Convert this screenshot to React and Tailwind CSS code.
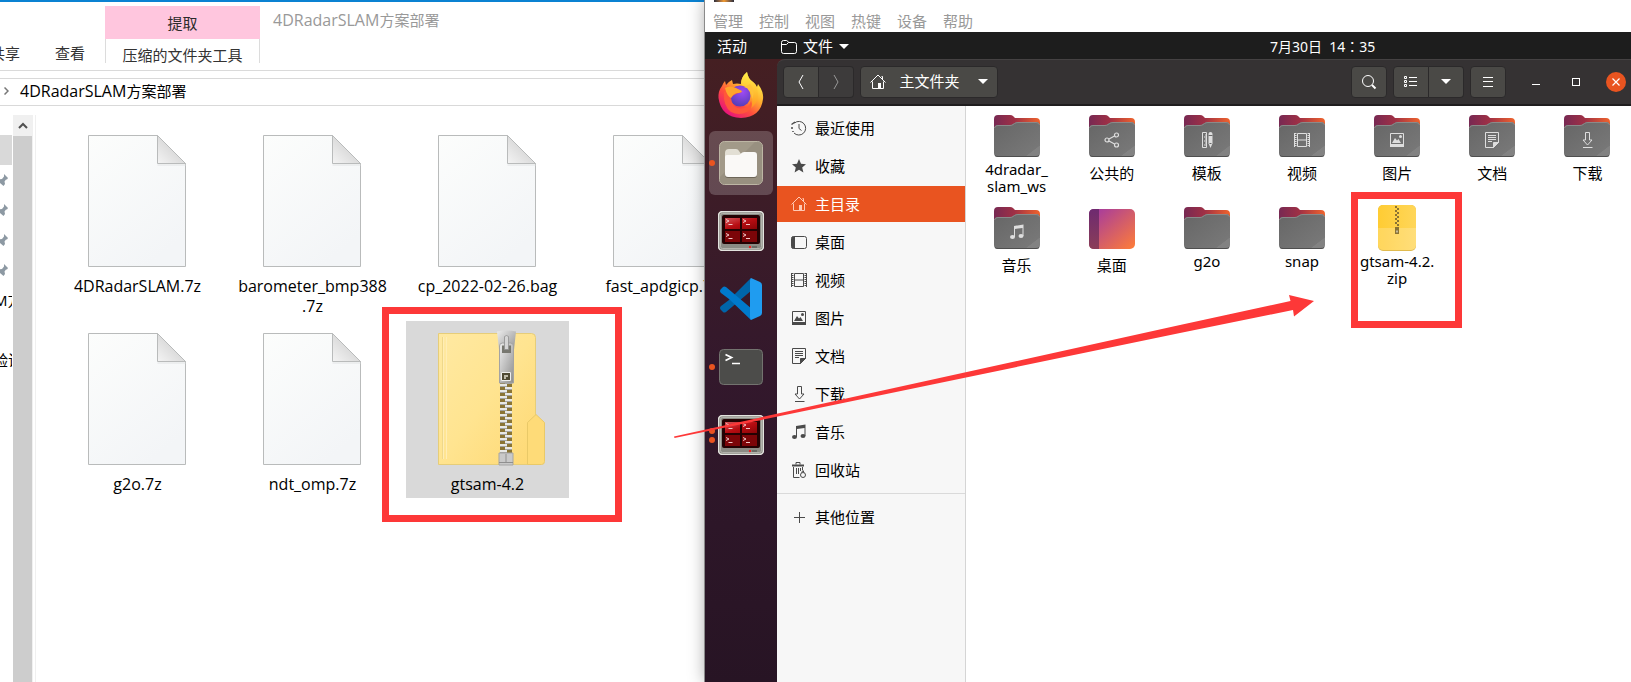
import React from 'react';

const files = [
  { name: '4DRadarSLAM.7z' },
  { name: 'barometer_bmp388.7z', lines: ['barometer_bmp388', '.7z'] },
  { name: 'cp_2022-02-26.bag' },
  { name: 'fast_apdgicp.7z' },
  { name: 'g2o.7z' },
  { name: 'ndt_omp.7z' },
  { name: 'gtsam-4.2', type: 'zip', selected: true },
];

const places = [
  { name: '最近使用', icon: 'recent' },
  { name: '收藏', icon: 'star' },
  { name: '主目录', icon: 'home', active: true },
  { name: '桌面', icon: 'desktop' },
  { name: '视频', icon: 'video' },
  { name: '图片', icon: 'picture' },
  { name: '文档', icon: 'document' },
  { name: '下载', icon: 'download' },
  { name: '音乐', icon: 'music' },
  { name: '回收站', icon: 'trash' },
];

const folders = [
  { lines: ['4dradar_', 'slam_ws'], latin: true },
  { lines: ['公共的'], icon: 'share' },
  { lines: ['模板'], icon: 'template' },
  { lines: ['视频'], icon: 'video' },
  { lines: ['图片'], icon: 'picture' },
  { lines: ['文档'], icon: 'document' },
  { lines: ['下载'], icon: 'download' },
  { lines: ['音乐'], icon: 'music' },
  { lines: ['桌面'], type: 'desktop' },
  { lines: ['g2o'], latin: true },
  { lines: ['snap'], latin: true },
  { lines: ['gtsam-4.2.', 'zip'], latin: true, type: 'zip' },
];

const menus = ['管理', '控制', '视图', '热键', '设备', '帮助'];

// 16x16 symbolic icons shared by the sidebar and the folder emblems
const glyphs = {
  recent: (
    <g fill="none" stroke="currentColor">
      <path d="M3.500 3A6.800 6.800 0 1 1 3 13" />
      <path d="M8 4v4.500l2.500 2" />
      <path d="M.5 4.500L4 2M1 7v2M2 11v1" strokeWidth="1.500" />
    </g>
  ),
  star: <path fill="currentColor" d="M8 1l2 4.800 5 .4-3.800 3.300 1.200 5L8 11.800 3.600 14.500l1.200-5L1 6.200l5-.4z" />,
  home: (
    <g fill="none" stroke="currentColor">
      <path d="M.5 8.500L8 1l7.500 7.500M12.500 5V2.500h-1" />
      <path d="M2.500 7.500v7h11v-7" />
      <path d="M8 9h3v5.500H8z" fill="currentColor" stroke="none" />
    </g>
  ),
  desktop: (
    <g>
      <rect x=".5" y="2.500" width="15" height="12" rx="2" fill="none" stroke="currentColor" />
      <path d="M2 2.500h2v12H2q-1.500 0-1.500-1.500V4Q.5 2.500 2 2.500z" fill="currentColor" />
    </g>
  ),
  video: (
    <g fill="none" stroke="currentColor">
      <path d="M3.500 1.500h9v13h-9zM3.500 8h9" />
      <path d="M1.500 1v14M14.500 1v14" strokeDasharray="1 1" strokeWidth="2" />
      <path d="M.5 1v14M15.500 1v14" />
    </g>
  ),
  picture: (
    <g>
      <path d="M1.500 1.500h13v13h-13z" fill="none" stroke="currentColor" />
      <path d="M1 12h14v3H1zM3 11l3-5 2 2.500L9.500 7l2.500 4z" fill="currentColor" />
      <circle cx="11.500" cy="4.500" r="1.500" fill="currentColor" />
    </g>
  ),
  document: (
    <g fill="none" stroke="currentColor">
      <path d="M1.500.5h13v10l-5 5h-8z" />
      <path d="M14.500 10.500h-5v5z" fill="currentColor" />
      <path d="M4 3.500h8M4 5.500h8M4 7.500h8M4 9.500h4" />
    </g>
  ),
  download: (
    <path fill="none" stroke="currentColor" d="M6.500 1v7H4l4.500 5L13 8h-2.500V.5h-4zM4 15.500h9.500" />
  ),
  music: (
    <g fill="currentColor">
      <ellipse cx="3.500" cy="13" rx="2.500" ry="2" />
      <ellipse cx="12" cy="12" rx="2.500" ry="2" />
      <path d="M5 2l9.500-1.500V12h-1V4L6 5v8H5z" />
    </g>
  ),
  trash: (
    <g fill="none" stroke="currentColor">
      <path d="M1 3.500h12" strokeWidth="2" />
      <path d="M5 2.500v-2h4v2M2.500 5v10.500h6M5.500 6v6M7.500 6v6M9.500 6v3M11.500 5v3" />
      <circle cx="12" cy="13" r="2.500" />
      <path d="M10.500 10.500l1.500-2 1 2" />
    </g>
  ),
  share: (
    <g fill="none" stroke="currentColor" strokeWidth="1.200">
      <circle cx="3" cy="8" r="2" />
      <circle cx="12.500" cy="3" r="2" />
      <circle cx="12.500" cy="13" r="2" />
      <path d="M5 7l5.500-3M5 9l5.500 3" />
    </g>
  ),
  template: (
    <g>
      <path d="M3.500.5h4v15h-4z" fill="none" stroke="currentColor" />
      <path d="M6 3h2M5 5h3M6 7h2M5 9h3M6 11h2M5 13h3" stroke="currentColor" />
      <path d="M9.500 2q0-2 2-2t2 2v9.500l-2 4.500-2-4.500z" fill="currentColor" />
      <path d="M9.500 3.500h4M10.500 11.500h2" stroke="#6a6a6a" />
    </g>
  ),
};

const Glyph = ({ name, className = '' }) => (
  <svg viewBox="0 0 16 16" className={`w-4 h-4 shrink-0 ${className}`} aria-hidden="true">
    {glyphs[name]}
  </svg>
);

const Caret = () => (
  <svg viewBox="0 0 10 5" className="w-[10px] h-[5px] shrink-0" aria-hidden="true">
    <path d="M0 0h10L5 5z" fill="#fff" />
  </svg>
);

const PaperIcon = () => (
  <svg viewBox="0 0 99 132" className="w-[99px] h-[132px]" aria-hidden="true">
    <defs>
      <linearGradient id="paper" x1="0" y1="0" x2=".6" y2="1">
        <stop offset="0" stopColor="#fcfdfc" />
        <stop offset="1" stopColor="#f3f5f7" />
      </linearGradient>
      <linearGradient id="fold" x1="1" y1="0" x2="0" y2="1">
        <stop offset=".5" stopColor="#dcdcdc" />
        <stop offset="1" stopColor="#f4f4f4" />
      </linearGradient>
    </defs>
    <path d="M.5.5h69l28 28v103H.5z" fill="url(#paper)" stroke="#b9bbbb" />
    <path d="M69.500 30h28" stroke="#e2e4e5" />
    <path d="M69.500.5v28h28z" fill="url(#fold)" stroke="#b9bbbb" />
  </svg>
);

const ZipFolderIcon = () => (
  <svg viewBox="0 0 99 132" className="w-[99px] h-[132px] overflow-visible" aria-hidden="true">
    <defs>
      <linearGradient id="zipBody" x1="0" y1="0" x2="1" y2="1">
        <stop offset="0" stopColor="#ffe9a2" />
        <stop offset=".5" stopColor="#ffe490" />
        <stop offset="1" stopColor="#fed873" />
      </linearGradient>
      <linearGradient id="metal" x1="0" y1="0" x2="1" y2="1">
        <stop offset="0" stopColor="#ededed" />
        <stop offset=".5" stopColor="#bdbdbd" />
        <stop offset="1" stopColor="#8d8d8d" />
      </linearGradient>
      <pattern id="teeth" width="12" height="6" patternUnits="userSpaceOnUse" x="62" y="50">
        <path d="M0 0h12v6H0z" fill="#8a7434" />
        <path d="M0 1h7v2H0zM5 4h7v2H5z" fill="#e9e9e6" />
        <path d="M0 3h7v1H0zM5 0h7v1H5z" fill="#a3a3a0" />
      </pattern>
    </defs>
    <path d="M.5.5h93q4 0 4 4v127H.5z" fill="url(#zipBody)" stroke="#e6cd79" />
    <path d="M5.500 4v122M8.500 4v122" stroke="#ffedb5" />
    <path d="M4.500 4v122" stroke="#efd88a" />
    <path d="M89.500 131.500v-42l8.500-8 8.500 8v39q0 3-3 3z" fill="#fedb78" stroke="#e9c968" />
    <path d="M62 50h12v71H62z" fill="url(#teeth)" />
    <path d="M61 120h14v12H61z" fill="#c9c9c9" stroke="#a5a5a5" />
    <path d="M68 121v8M61 129.500h14" stroke="#8f8f8f" />
    <path d="M59-1.500q9.500-2 19 0l-2 18q-2 3-4 3h-8q-2 0-3-3z" fill="url(#metal)" />
    <path d="M61.500 13q0-3 3-3h8q3 0 3 3v37h-14z" fill="url(#metal)" stroke="#a3a3a3" />
    <path d="M64 12.500h9V20h-9z" fill="#77776f" />
    <path d="M66.500 3.500q2-2 4 0v13h-4z" fill="#d6d6d6" stroke="#8f8f8f" strokeWidth=".8" />
    <path d="M63.500 39.500h9v8h-9z" fill="#4e4934" stroke="#eee" />
    <path d="M66 42h4v2h-2v2h-2z" fill="#bdb9a8" />
  </svg>
);

const FolderIcon = ({ emblem }) => (
  <svg viewBox="0 0 46 42" className="w-[46px] h-[42px]" aria-hidden="true">
    <defs>
      <linearGradient id="back">
        <stop offset="0" stopColor="#772953" />
        <stop offset=".45" stopColor="#a03045" />
        <stop offset="1" stopColor="#f0642d" />
      </linearGradient>
      <linearGradient id="front" x1="0" y1="0" x2="1" y2="1">
        <stop offset="0" stopColor="#666" />
        <stop offset=".83" stopColor="#777" />
        <stop offset=".84" stopColor="#828282" />
      </linearGradient>
    </defs>
    <path d="M0 4q0-4 4-4h12q2 0 3 1l2 2h21q4 0 4 4v25H0z" fill="url(#back)" />
    <path d="M0 14q0-4 4-4h12q2 0 3-1l1.500-1Q22 7 24 7h18q4 0 4 4v27q0 4-4 4H4q-4 0-4-4z" fill="url(#front)" />
    <path d="M.5 13q.5-2.500 3.500-2.500h12q2 0 3-1l1.500-1q1.500-1 3.500-1h18q3 0 3.500 2.500" fill="none" stroke="#8a8a8a" />
    <path d="M1 40.500q1 1 3 1h38q2 0 3-1" fill="none" stroke="#4f4f4f" />
    {emblem && (
      <svg x="15" y="17" width="16" height="16" viewBox="0 0 16 16" color="#dedede">
        {glyphs[emblem]}
      </svg>
    )}
  </svg>
);

const DesktopIcon = () => (
  <svg viewBox="0 0 46 40" className="w-[46px] h-10" aria-hidden="true">
    <defs>
      <linearGradient id="desk" x1="0" y1="0" x2="1" y2="1">
        <stop offset=".1" stopColor="#a83c9c" />
        <stop offset=".5" stopColor="#cf5a6e" />
        <stop offset="1" stopColor="#ff7d38" />
      </linearGradient>
      <linearGradient id="deskBar" x1="0" y1="0" x2="0" y2="1">
        <stop offset="0" stopColor="#6e2a70" />
        <stop offset="1" stopColor="#8a3e58" />
      </linearGradient>
    </defs>
    <rect width="46" height="40" rx="5" fill="url(#desk)" />
    <path d="M10 0v40H5q-5 0-5-5V5q0-5 5-5z" fill="url(#deskBar)" />
  </svg>
);

const ArchiveIcon = () => (
  <svg viewBox="0 0 38 46" className="w-[38px] h-[46px]" aria-hidden="true">
    <defs>
      <linearGradient id="archive" x1="0" y1="0" x2="1" y2="0">
        <stop offset="0" stopColor="#ffcc33" />
        <stop offset="1" stopColor="#ffd659" />
      </linearGradient>
      <pattern id="archiveTeeth" width="4" height="4" patternUnits="userSpaceOnUse" x="17" y="1">
        <path d="M0 0h2v2H0zM2 2h2v2H2z" fill="#8b7334" />
      </pattern>
    </defs>
    <rect width="38" height="46" rx="5" fill="#e0bb50" />
    <rect width="38" height="45" rx="5" fill="url(#archive)" />
    <path d="M0 23h38v17q0 5-5 5H5q-5 0-5-5z" fill="#fff" opacity=".2" />
    <path d="M17 1h4v20h-4z" fill="url(#archiveTeeth)" />
    <path d="M17 22h4v7h-4z" fill="#8b7334" />
    <path d="M18.500 25.500h1v2h-1z" fill="#fff" />
  </svg>
);

const FirefoxIcon = () => (
  <svg viewBox="0 0 46 46" className="w-[46px] h-[46px]" aria-hidden="true">
    <defs>
      <linearGradient id="fox" x1=".85" y1=".1" x2=".2" y2=".95">
        <stop offset="0" stopColor="#fff44f" />
        <stop offset=".35" stopColor="#ffb02e" />
        <stop offset=".65" stopColor="#ff4f3c" />
        <stop offset="1" stopColor="#e5107f" />
      </linearGradient>
      <radialGradient id="globe" cx=".6" cy=".3" r=".8">
        <stop offset="0" stopColor="#a04bf5" />
        <stop offset="1" stopColor="#4a3cae" />
      </radialGradient>
      <linearGradient id="flame" x1="0" y1="0" x2="0" y2="1">
        <stop offset="0" stopColor="#fff14a" />
        <stop offset="1" stopColor="#ff9a1f" />
      </linearGradient>
    </defs>
    <path d="M4 14q1-3 3-5l1 4q2-3 6-5l1 4q4-1 8 0 0-7 6-12 1 7 6 10 3 2 4 5l1-3q6 8 5 15-2 18-22 19Q3 45 .5 26 0 19 4 14z" fill="url(#fox)" />
    <path d="M23 12q0-7 6-12 1 7 6 10 5 4 5 14-1 8-7 12 3-10-1-16-4-5-9-8z" fill="url(#flame)" opacity=".85" />
    <circle cx="22" cy="24" r="10.500" fill="url(#globe)" />
    <path d="M6 20q4-5 10-4 6 2 8 4l-6 2q-3 1-5 4 1 10 10 10.500 8 0 10-7.500 3 6-4 11-8 4-16 0Q5 34 6 20z" fill="#ff5a38" opacity=".9" />
    <path d="M7 16q5-3 11 0l6 3q-1 2-5 2-4 1-6 5-4-2-6-10z" fill="#ffa52c" />
    <path d="M26 15q8 1 8 12 4-9-2-15z" fill="#ffc23a" />
  </svg>
);

const NautilusIcon = () => (
  <svg viewBox="0 0 44 44" className="w-11 h-11" aria-hidden="true">
    <rect x=".5" y=".5" width="43" height="43" rx="5" fill="#a29a89" stroke="#bdb6a4" />
    <path d="M1 36L36 1h3q4 0 4 4v34q0 4-4 4H5q-4 0-4-4z" fill="#8e8677" opacity=".5" />
    <path d="M6 12q0-4 4-4h7q2 0 3 2l2 3v10H6z" fill="#e2dfd4" />
    <path d="M6 17h32v17q0 3-3 3H9q-3 0-3-3z" fill="#6d6658" />
    <path d="M6 16q0-2 2-2h11q2 0 3-1.500t3-1.500h10q3 0 3 3v19q0 3-3 3H9q-3 0-3-3z" fill="#faf9f7" />
  </svg>
);

const TerminatorIcon = () => (
  <svg viewBox="0 0 46 40" className="w-[46px] h-10" aria-hidden="true">
    <defs>
      <linearGradient id="redPane" x1="0" y1="0" x2="1" y2="1">
        <stop offset="0" stopColor="#d4555a" />
        <stop offset=".5" stopColor="#b80d12" />
        <stop offset="1" stopColor="#8a0508" />
      </linearGradient>
    </defs>
    <rect x=".5" y=".5" width="45" height="39" rx="4" fill="#8b8b84" stroke="#e3e3de" strokeWidth="1.500" />
    <rect x="2.500" y="2.500" width="41" height="35" rx="2" fill="none" stroke="#b4b4ad" />
    <rect x="4" y="4" width="38" height="29" rx="2" fill="#240203" />
    <path d="M7 7h15v11H7zM24 7h15v11H24z" fill="url(#redPane)" />
    <path d="M7 20h15v11H7zM24 20h15v11H24z" fill="#7c0508" />
    <g fill="none" stroke="#f0c8c8" strokeWidth="1">
      <path d="M8 8.500l3 1.500-3 1.500M10.500 13.500h4M25 8.500l3 1.500-3 1.500M28 13.500h4M8 22.500l3 1.500-3 1.500M10.500 27.500h4M25 22.500l3 1.500-3 1.500M28 27.500h4" />
    </g>
    <circle cx="32" cy="36" r="1.200" fill="#f02020" />
    <path d="M34 35h5v2h-5z" fill="#6a6a64" />
  </svg>
);

const CodeIcon = () => (
  <svg viewBox="0 0 42 42" className="w-[42px] h-[42px]" aria-hidden="true">
    <path d="M31 0L9 22l-8 6q-2 2 0 4l2 2q1 1 3 0L32 12z" fill="#0065a9" />
    <path d="M31 42L9 21l-8-6q-2-2 0-4l2-2q1-1 3 0l26 22z" fill="#007acc" />
    <path d="M31 0l9 4q2 1 2 3v28q0 2-2 3l-9 4q-1-1-1-3V3q0-2 1-3z" fill="#1f9cf0" />
  </svg>
);

const TerminalIcon = () => (
  <svg viewBox="0 0 44 36" className="w-11 h-9" aria-hidden="true">
    <rect x=".5" y=".5" width="43" height="35" rx="4" fill="#4c4c4a" stroke="#73736f" />
    <path d="M6.500 5.500l6 3-6 3" fill="none" stroke="#fff" strokeWidth="1.800" />
    <path d="M13 14.500h8" stroke="#fff" strokeWidth="1.500" />
  </svg>
);

const dockApps = [
  { name: 'Firefox', Icon: FirefoxIcon, dots: 0 },
  { name: '文件', Icon: NautilusIcon, dots: 1, active: true },
  { name: 'Terminator', Icon: TerminatorIcon, dots: 0 },
  { name: 'Visual Studio Code', Icon: CodeIcon, dots: 0 },
  { name: '终端', Icon: TerminalIcon, dots: 1 },
  { name: 'Terminator', Icon: TerminatorIcon, dots: 2 },
];

const Pin = () => (
  <svg viewBox="0 0 9 12" className="w-[9px] h-3" aria-hidden="true">
    <path d="M5 0l4 4-1 1.500H7L5.500 7.500 6 10l-1.500 2L0 8V5.500l3-.5 2-2.500z" fill="#8d99a3" />
  </svg>
);

const FolderTitle = () => (
  <>
    <span className="text-base leading-5">4DRadarSLAM</span>方案部署
  </>
);

const Explorer = () => (
  <section className="w-[705px] shrink-0 flex flex-col overflow-hidden border-t-2 border-[#0a82d2] bg-white text-[15px] text-black font-['Open_Sans','Noto_Sans_CJK_SC',sans-serif]">
    {/* Ribbon */}
    <div className="flex items-end h-[61px] shrink-0 leading-5">
      <div className="w-[105px] shrink-0 flex items-end gap-[35px] h-full text-[#333]">
        <button className="-ml-[10px] whitespace-nowrap">共享</button>
        <button className="whitespace-nowrap">查看</button>
      </div>
      <div className="w-[155px] shrink-0 flex flex-col">
        <div className="h-[33px] flex items-center justify-center bg-[#ffc6de] text-[#2b2b2b]">提取</div>
        <button className="h-6 pt-[6px] border-x border-[#dcdcdc] text-[#333]">压缩的文件夹工具</button>
      </div>
      <h1 className="self-start pt-2 pl-[13px] text-[#999]"><FolderTitle /></h1>
    </div>

    {/* Address bar */}
    <div className="mt-[7px] mb-[7px] border-t border-[#dadada]" />
    <div className="h-7 shrink-0 flex items-center gap-[11px] pl-1 pb-[2px] border-y border-[#d9d9d9]">
      <svg viewBox="0 0 5 8" className="w-[5px] h-2" aria-hidden="true">
        <path d="M.5.5L4 4 .5 7.500" fill="none" stroke="#777" strokeWidth="1.500" />
      </svg>
      <span className="leading-5"><FolderTitle /></span>
    </div>

    <div className="flex flex-1 pt-[9px]">
      <nav className="w-3 mr-[1px] pt-5 shrink-0 overflow-hidden whitespace-nowrap">
        <div className="h-[30px] bg-[#d9d9d9]" />
        {[0, 1, 2, 3].map((i) => (
          <div key={i} className="h-[30px] flex items-center -ml-[1px]"><Pin /></div>
        ))}
        <div className="h-[30px] leading-[30px] -ml-[6px]">M方</div>
        <div className="h-[30px]" />
        <div className="h-[30px] leading-[30px] -ml-[7px]">验证</div>
      </nav>
      <div className="w-5 shrink-0 flex flex-col bg-[#f0f0f0]">
        <button className="h-[21px] flex items-center justify-center" aria-label="向上滚动">
          <svg viewBox="0 0 10 7" className="w-[10px] h-[7px]" aria-hidden="true">
            <path d="M1 6l4-4 4 4" fill="none" stroke="#505050" strokeWidth="2" />
          </svg>
        </button>
        <div className="flex-1 mr-[1px] bg-[#cdcdcd]" />
      </div>
      <div className="ml-[2px] border-l border-[#f0f0f0]" />

      <ul className="grid grid-cols-[repeat(4,163px)] auto-rows-min gap-x-3 gap-y-[1px] items-start pl-5 pt-2">
        {files.map((file) => (
          <li
            key={file.name}
            className={`flex flex-col items-center pt-3 pb-1 ${file.selected ? 'bg-[#d9d9d9]' : ''}`}
          >
            {file.type === 'zip' ? <ZipFolderIcon /> : <PaperIcon />}
            <span className="mt-[9px] text-center leading-5 text-base">
              {(file.lines || [file.name]).map((line) => (
                <span key={line} className="block">{line}</span>
              ))}
            </span>
          </li>
        ))}
      </ul>
    </div>
  </section>
);

const Dock = () => (
  <aside className="w-[72px] shrink-0 flex flex-col items-center gap-1 pt-1 bg-linear-to-b from-[#451f22] via-[#33182c] via-50% to-[#271424]">
    {dockApps.map(({ name, Icon, dots, active }, i) => (
      <button
        key={i}
        aria-label={name}
        className={`relative w-16 h-16 shrink-0 flex items-center justify-center rounded-md ${active ? 'bg-white/20' : ''}`}
      >
        <span className="absolute left-0 flex flex-col gap-[3px]">
          {Array.from({ length: dots }, (_, d) => (
            <span key={d} className="w-[6px] h-[6px] rounded-full bg-[#e95420]" />
          ))}
        </span>
        <Icon />
      </button>
    ))}
  </aside>
);

const headerButton = 'h-8 flex items-center justify-center bg-[#4a4946] border border-[#2b292a] text-white';

const HeaderBar = () => (
  <header className="h-[47px] shrink-0 flex items-center pl-[6px] pr-[5px] pb-[1px] rounded-tl-lg bg-[#353233] border-t border-t-[#454243] border-b-2 border-b-[#1f1d1e]">
    <button className={`${headerButton} w-9 rounded-l`} aria-label="后退">
      <svg viewBox="0 0 6 14" className="w-[6px] h-[14px]" aria-hidden="true">
        <path d="M5 0L1 7l4 7" fill="none" stroke="#fff" />
      </svg>
    </button>
    <button className="h-8 w-[35px] flex items-center justify-center rounded-r bg-[#3d3b3b] border-y border-r border-[#2b292a]" aria-label="前进">
      <svg viewBox="0 0 6 14" className="w-[6px] h-[14px]" aria-hidden="true">
        <path d="M1 0l4 7-4 7" fill="none" stroke="#999" />
      </svg>
    </button>
    <button className={`${headerButton} ml-[6px] w-[138px] rounded whitespace-nowrap`}>
      <Glyph name="home" />
      <span className="ml-[13px] mr-[18px]">主文件夹</span>
      <Caret />
    </button>
    <div className="flex-1" />
    <button className={`${headerButton} w-9 rounded`} aria-label="搜索">
      <svg viewBox="0 0 16 16" className="w-4 h-4" fill="none" stroke="#fff" aria-hidden="true">
        <circle cx="7" cy="7" r="5.500" />
        <path d="M11 11l3.500 3.500" strokeWidth="2" />
      </svg>
    </button>
    <button className={`${headerButton} ml-[6px] w-9 rounded-l`} aria-label="列表视图">
      <svg viewBox="0 0 14 12" className="w-[14px] h-3" fill="none" stroke="#fff" aria-hidden="true">
        <path d="M.5.5h2v2h-2zM.5 4.500h2v2h-2zM.5 8.500h2v2h-2zM5 1.500h8M5 5.500h8M5 9.500h8" />
      </svg>
    </button>
    <button className={`${headerButton} w-[35px] border-l-0 rounded-r`} aria-label="视图选项">
      <Caret />
    </button>
    <button className={`${headerButton} ml-[6px] w-9 rounded`} aria-label="菜单">
      <svg viewBox="0 0 12 12" className="w-3 h-3" stroke="#fff" aria-hidden="true">
        <path d="M1 1.500h10M1 5.500h10M1 10.500h10" />
      </svg>
    </button>
    <button className="ml-5 w-5 h-5 flex items-center justify-center" aria-label="最小化">
      <span className="w-2 h-[1px] mt-[5px] bg-white" />
    </button>
    <button className="ml-5 w-5 h-5 flex items-center justify-center" aria-label="最大化">
      <span className="w-2 h-2 border border-white" />
    </button>
    <button className="ml-5 w-5 h-5 flex items-center justify-center rounded-full bg-[#e95420]" aria-label="关闭">
      <svg viewBox="0 0 8 8" className="w-2 h-2" aria-hidden="true">
        <path d="M.5.5l7 7M7.500.5l-7 7" stroke="#fff" strokeWidth="1.200" />
      </svg>
    </button>
  </header>
);

const Sidebar = () => (
  <nav className="w-[189px] shrink-0 flex flex-col pt-1 bg-[#f7f7f7] border-r border-[#d5d5d5] text-black">
    <ul className="flex flex-col gap-[2px]">
      {places.map(({ name, icon, active }) => (
        <li key={name}>
          <a
            href={`#${icon}`}
            className={`h-9 flex items-center gap-2 pl-[14px] ${active ? 'bg-[#e95420] text-white' : ''}`}
          >
            <Glyph name={icon} className={active ? 'text-[#ffc9b5]' : 'text-[#4a4a4a]'} />
            {name}
          </a>
        </li>
      ))}
    </ul>
    <a href="#other" className="mt-[5px] pt-[5px] border-t border-[#dadada]">
      <span className="h-9 flex items-center gap-2 pl-[14px]">
        <svg viewBox="0 0 16 16" className="w-4 h-4" stroke="#4a4a4a" aria-hidden="true">
          <path d="M3 8.500h11M8.500 3v11" />
        </svg>
        其他位置
      </span>
    </a>
  </nav>
);

const FolderGrid = () => (
  <div className="flex-1 overflow-hidden bg-white text-black">
    <ul className="grid grid-cols-7 gap-y-2 pl-[3px] -mr-1 pt-[6px]">
      {folders.map((item) => (
        <li key={item.lines[0]} className="h-[84px] flex flex-col items-center">
          <span className="h-12 flex items-center">
            {item.type === 'desktop' && <span className="flex pt-[2px]"><DesktopIcon /></span>}
            {item.type === 'zip' && <ArchiveIcon />}
            {!item.type && <FolderIcon emblem={item.icon} />}
          </span>
          <span
            className={`text-center ${
              item.latin ? "mt-[1px] leading-[17px] font-['Noto_Sans',sans-serif]" : 'mt-[2px] leading-[22px]'
            }`}
          >
            {item.lines.map((line) => (
              <span key={line} className="block">{line}</span>
            ))}
          </span>
        </li>
      ))}
    </ul>
  </div>
);

const VirtualMachine = () => (
  <section className="relative flex-1 min-w-0 flex flex-col bg-white shadow-[0_0_16px_rgba(0,0,0,0.35)] outline outline-1 outline-[#8a8a8a] text-[15px] font-['Noto_Sans','Noto_Sans_CJK_SC',sans-serif]">
    {/* Host window frame */}
    <div className="h-8 shrink-0 flex flex-col">
      <div className="h-[2px] ml-[9px] w-5 bg-linear-to-r from-[#2d2d38] via-[#f39a2b] to-[#2d2d38]" />
      <div className="flex gap-4 pl-2 pt-2 leading-[22px] text-[#999]">
        {menus.map((menu) => (
          <button key={menu}>{menu}</button>
        ))}
      </div>
    </div>

    {/* Top panel */}
    <div className="h-[27px] shrink-0 flex items-center pt-[2px] bg-[#1d1d1d] text-white">
      <button className="w-[76px] pl-3 text-left">活动</button>
      <button className="flex items-center gap-[6px]">
        <svg viewBox="0 0 16 14" className="w-4 h-[14px]" fill="none" stroke="#fff" aria-hidden="true">
          <path d="M.5 11.500v-9q0-2 2-2h3q1 0 2 2h6q2 0 2 2v7q0 2-2 2h-11q-2 0-2-2zM.5 4.500h5l2-2" />
        </svg>
        文件
        <Caret />
      </button>
      <time className="ml-[421px] whitespace-pre text-sm font-['Noto_Sans','Noto_Sans_CJK_TC',sans-serif]">7月30日  14：35</time>
    </div>

    <div className="flex flex-1 bg-[#451f22]">
      <Dock />
      <div className="flex-1 min-w-0 flex flex-col">
        <HeaderBar />
        <div className="flex flex-1">
          <Sidebar />
          <FolderGrid />
        </div>
      </div>
    </div>
  </section>
);

// Red marks drawn over both windows
const Annotations = () => (
  <div className="absolute inset-0 pointer-events-none">
    <div className="absolute left-[382px] top-[307px] w-60 h-[215px] border-[7px] border-[#fd3838]" />
    <div className="absolute left-[1351px] top-[192px] w-[111px] h-[136px] border-[7px] border-[#fd3838]" />
    <svg viewBox="0 0 640 144" className="absolute left-[674px] top-[294px] w-[640px] h-36" aria-hidden="true">
      <path d="M0 142.500L506 31l110.500-24-1.500-6L640 7l-20 15.500-1-6.500-113 23L.5 144z" fill="#fd3838" />
    </svg>
  </div>
);

const App = () => (
  <main className="relative min-h-screen flex overflow-hidden bg-white">
    <Explorer />
    <VirtualMachine />
    <Annotations />
  </main>
);

export default App;
